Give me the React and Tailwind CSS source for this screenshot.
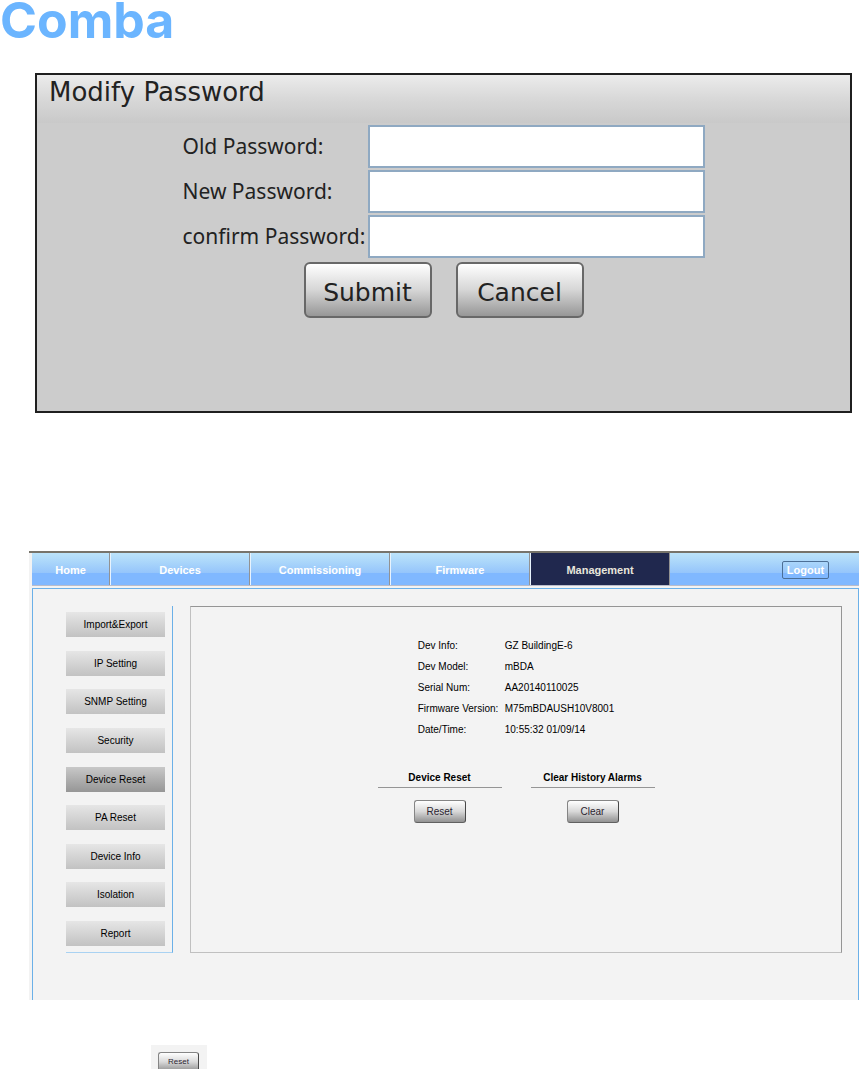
import React, { useState } from 'react';
import clsx from 'clsx';

const PASSWORD_FIELDS = [
  { id: 'old-password', label: 'Old Password:' },
  { id: 'new-password', label: 'New Password:' },
  { id: 'confirm-password', label: 'confirm Password:' },
];

const TABS = ['Home', 'Devices', 'Commissioning', 'Firmware', 'Management'];

const MENU = [
  'Import&Export',
  'IP Setting',
  'SNMP Setting',
  'Security',
  'Device Reset',
  'PA Reset',
  'Device Info',
  'Isolation',
  'Report',
];

const DEVICE_INFO = [
  ['Dev Info:', 'GZ BuildingE-6'],
  ['Dev Model:', 'mBDA'],
  ['Serial Num:', 'AA20140110025'],
  ['Firmware Version:', 'M75mBDAUSH10V8001'],
  ['Date/Time:', '10:55:32 01/09/14'],
];

const ACTIONS = [
  { title: 'Device Reset', button: 'Reset' },
  { title: 'Clear History Alarms', button: 'Clear' },
];

const DialogButton = ({ children, ...props }) => (
  <button
    className="h-14 w-32 rounded-md border-2 border-[#686868] bg-linear-to-b from-white via-[#d6d6d6] to-[#979797] pt-1 font-['DejaVu_Sans'] text-[25px] leading-none text-[#222]"
    {...props}
  >
    {children}
  </button>
);

const SmallButton = ({ children, className }) => (
  <button
    type="button"
    className={clsx(
      'rounded-[3px] border border-t-[#858585] border-r-[#484848] border-b-[#606060] border-l-[#858585] bg-linear-to-b from-white via-[#d8d8d8] to-[#929292] text-[#2b2430]',
      className
    )}
  >
    {children}
  </button>
);

const ModifyPassword = () => (
  <form
    onSubmit={(e) => e.preventDefault()}
    className="mt-8 mr-[7px] ml-[35px] border-2 border-[#1f1f1f] bg-[#ccc] pb-[93px]"
  >
    <h2 className="h-12 bg-linear-to-b from-[#ececec] via-[#d8d8d8] to-[#c9c9c9] pl-3 font-['DejaVu_Sans'] text-[26px] leading-[34px] text-[#222]">
      Modify Password
    </h2>
    <div className="flex flex-col items-center">
      <div className="mt-0.5 flex flex-col">
        {PASSWORD_FIELDS.map(({ id, label }) => (
          <div key={id} className="flex h-[45px] items-start">
            <label
              htmlFor={id}
              className="w-[185px] font-['Noto_Sans'] text-[21px] leading-[43px] whitespace-nowrap text-[#222]"
            >
              {label}
            </label>
            <input
              id={id}
              type="password"
              className="h-[43px] w-[337px] border-2 border-[#8fa9c2] bg-white px-2"
            />
          </div>
        ))}
      </div>
      <div className="mt-0.5 flex gap-6">
        <DialogButton type="submit">Submit</DialogButton>
        <DialogButton type="reset">Cancel</DialogButton>
      </div>
    </div>
  </form>
);

const NavBar = () => (
  <nav className="ml-[3px] flex h-[33px] border-b border-[#b9bccb] bg-[linear-gradient(to_bottom,#bce4fa_0%,#95c5fb_62%,#80b8ff_63%,#80b8ff_100%)] text-[11px] font-bold text-white">
    {TABS.map((tab) => (
      <a
        key={tab}
        href="#"
        className={clsx(
          'flex items-center justify-center border-r border-[#929292] pt-0.5',
          tab === 'Home' ? 'w-[78px]' : 'w-[140px] border-l border-l-[#e8f3fd]',
          tab === 'Management' && 'bg-[#20284e] text-[#e8e6dc]'
        )}
      >
        {tab}
      </a>
    ))}
    <div className="flex flex-1 items-center justify-end pt-0.5 pr-[30px]">
      <button
        type="button"
        className="h-[18px] w-[47px] rounded-xs border border-[#4b6f96] leading-none"
      >
        Logout
      </button>
    </div>
  </nav>
);

const SideMenu = ({ active, onSelect }) => (
  <div className="flex w-[107px] flex-col justify-between border-r border-b border-r-[#6bb0e8] border-b-[#a9d2f2] pt-1.5 pr-[7px] pb-1.5">
    {MENU.map((item) => (
      <button
        key={item}
        type="button"
        onClick={() => onSelect(item)}
        className={clsx(
          'h-[25px] bg-linear-to-b',
          item === active ? 'from-[#c8c8c8] to-[#969696]' : 'from-[#e6e6e6] to-[#c2c2c2]'
        )}
      >
        {item}
      </button>
    ))}
  </div>
);

const DeviceReset = () => (
  <div className="flex min-h-[347px] flex-1 flex-col items-center border border-t-[#959595] border-r-[#959595] border-b-[#c0c0c0] border-l-[#c0c0c0] pt-7">
    <table>
      <tbody>
        {DEVICE_INFO.map(([label, value]) => (
          <tr key={label} className="h-[21px]">
            <th scope="row" className="w-[87px] p-0 text-left font-normal whitespace-nowrap">
              {label}
            </th>
            <td className="p-0 whitespace-nowrap">{value}</td>
          </tr>
        ))}
      </tbody>
    </table>
    <div className="mt-[29px] flex gap-[29px]">
      {ACTIONS.map(({ title, button }) => (
        <section key={title} className="flex w-[124px] flex-col items-center">
          <h3 className="w-full border-b border-[#959595] text-center font-bold leading-[18px]">
            {title}
          </h3>
          <SmallButton className="mt-3 h-[23px] w-[52px]">{button}</SmallButton>
        </section>
      ))}
    </div>
  </div>
);

const App = () => {
  const [active, setActive] = useState('Device Reset');

  return (
    <div className="bg-white font-['Liberation_Sans',sans-serif] text-[10px] text-black">
      <header className="h-[41px] font-['Inter',sans-serif] text-[50px] leading-[41px] font-bold text-[#6bb5ff]">
        Comba
      </header>

      <ModifyPassword />

      <main className="mt-[138px] ml-[29px] border-t-2 border-[#77746a] bg-[#f3f3f3]">
        <NavBar />
        <div className="mt-0.5 ml-[3px] flex gap-[17px] border-x border-t border-[#6bb0e8] pt-[17px] pr-4 pb-[47px] pl-[33px]">
          <SideMenu active={active} onSelect={setActive} />
          <DeviceReset />
        </div>
      </main>

      {/* Cut off by the page edge */}
      <div className="mt-[45px] ml-[151px] h-6 w-14 overflow-hidden bg-[#f3f3f3] pt-[7px] pl-[7px]">
        <SmallButton className="h-5 w-[41px] text-[8px]">Reset</SmallButton>
      </div>
    </div>
  );
};

export default App;
